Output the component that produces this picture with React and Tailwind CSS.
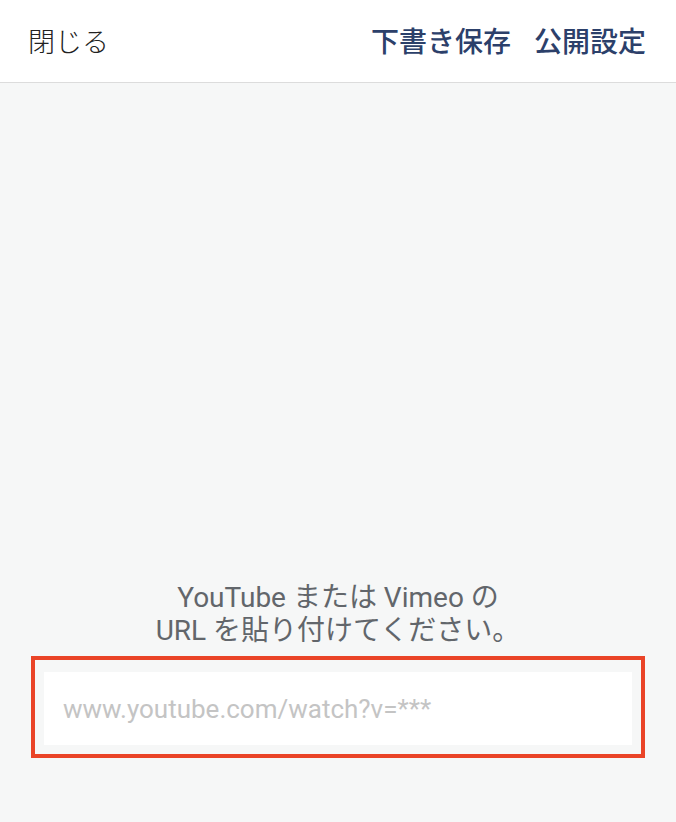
export default function App() {
  return (
    <div
      className="flex h-[822px] w-full flex-col bg-[#f6f7f7]"
      style={{ fontFamily: '"Roboto", "Noto Sans CJK JP", sans-serif' }}
    >
      <header className="flex h-[83px] shrink-0 items-center justify-between border-b border-[#dcdcdc] bg-white pl-[28px] pr-[30px] pt-[4px]">
        <button className="text-[27px] font-light text-[#222]">閉じる</button>
        <div className="flex items-center gap-[23px]">
          <button className="text-[28px] font-medium text-[#2c406a]">下書き保存</button>
          <button className="text-[28px] font-medium text-[#2c406a]">公開設定</button>
        </div>
      </header>

      <main className="flex flex-1 flex-col">
        <div className="flex-1" />
        <p className="text-center text-[28px] leading-[33px] text-[#62666b]">
          YouTube または Vimeo の
          <br />
          URL を貼り付けてください。
        </p>
        <div className="mx-[31px] mb-[64px] mt-[9px] border-[4px] border-[#ea4427] px-[9px] pb-[9px] pt-[12px]">
          <input
            type="text"
            placeholder="www.youtube.com/watch?v=***"
            className="h-[73px] w-full bg-white px-[19px] text-[26px] text-[#333] outline-none placeholder:text-[#c4c4c4]"
          />
        </div>
      </main>
    </div>
  );
}
